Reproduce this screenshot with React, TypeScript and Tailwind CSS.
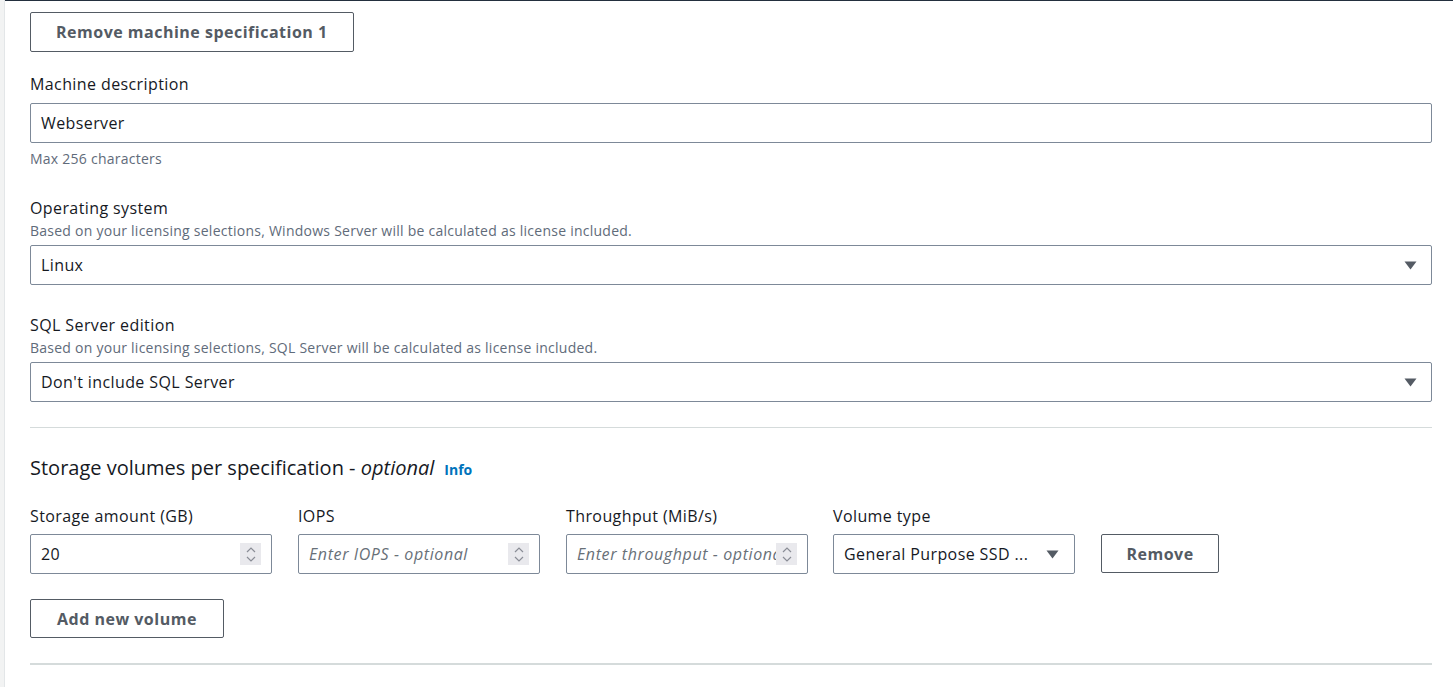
import React from "react"

const font = { fontFamily: '"Open Sans", "Liberation Sans", Arial, sans-serif' }

function Caret() {
  return (
    <svg width="13" height="9" viewBox="0 0 13 9" className="shrink-0">
      <path d="M0.5 0.5 H12.5 L6.5 8.5 Z" fill="#545b64" />
    </svg>
  )
}

function Spinner() {
  return (
    <div className="shrink-0 w-[21px] h-[22px] bg-[#e9e9ed] flex flex-col items-center justify-center gap-[3px]">
      <svg width="10" height="6" viewBox="0 0 10 6">
        <path d="M1 5 L5 1 L9 5" fill="none" stroke="#8a8d96" strokeWidth="1.2" />
      </svg>
      <svg width="10" height="6" viewBox="0 0 10 6">
        <path d="M1 1 L5 5 L9 1" fill="none" stroke="#8a8d96" strokeWidth="1.2" />
      </svg>
    </div>
  )
}

function NumberField({ value, placeholder }: { value?: string; placeholder?: string }) {
  return (
    <div className="h-10 w-[242px] border border-[#7d8998] rounded-[2px] flex items-center pl-[10px] pr-[10px] bg-white">
      <div className="flex-1 overflow-hidden whitespace-nowrap">
        {value ? (
          <span className="text-[16px] tracking-[0.4px] text-[#16191f]">{value}</span>
        ) : (
          <span className="text-[16px] tracking-[0.6px] italic text-[#687078]">{placeholder}</span>
        )}
      </div>
      <Spinner />
    </div>
  )
}

function Select({ value, className }: { value: string; className?: string }) {
  return (
    <div
      className={
        "h-10 border border-[#7d8998] rounded-[2px] flex items-center pl-[10px] pr-[14px] bg-white " +
        (className ?? "")
      }
    >
      <span className="flex-1 text-[16px] tracking-[0.4px] text-[#16191f] whitespace-nowrap overflow-hidden">
        {value}
      </span>
      <Caret />
    </div>
  )
}

function Button({ children, className }: { children: React.ReactNode; className?: string }) {
  return (
    <button
      className={
        "h-10 border border-[#545b64] rounded-[2px] bg-white text-[16px] tracking-[0.5px] font-bold text-[#545b64] " +
        (className ?? "")
      }
    >
      {children}
    </button>
  )
}

function Label({ children }: { children: React.ReactNode }) {
  return <div className="text-[16px] tracking-[0.4px] leading-[22px] text-[#16191f]">{children}</div>
}

function Hint({ children }: { children: React.ReactNode }) {
  return <div className="text-[14px] tracking-[0.25px] leading-[18px] text-[#5f6b7a]">{children}</div>
}

export default function App() {
  return (
    <div className="w-[1453px] h-[687px] bg-white flex overflow-hidden" style={font}>
      <div className="w-[5px] shrink-0 bg-[#f2f3f3] border-r border-[#e3e6e8]" />
      <div className="flex-1 border-t border-[#232f3e] pl-[25px] pr-[21px]">
        <Button className="mt-[11px] px-[25px]">Remove machine specification 1</Button>

        <div className="mt-[21px]">
          <Label>Machine description</Label>
          <div className="mt-[8px] h-10 border border-[#7d8998] rounded-[2px] flex items-center pl-[10px]">
            <span className="text-[16px] tracking-[0.4px] text-[#16191f]">Webserver</span>
          </div>
          <div className="mt-[7px]">
            <Hint>Max 256 characters</Hint>
          </div>
        </div>

        <div className="mt-[29px]">
          <Label>Operating system</Label>
          <div className="mt-[3px]">
            <Hint>Based on your licensing selections, Windows Server will be calculated as license included.</Hint>
          </div>
          <Select value="Linux" className="mt-[5px]" />
        </div>

        <div className="mt-[29px]">
          <Label>SQL Server edition</Label>
          <div className="mt-[3px]">
            <Hint>Based on your licensing selections, SQL Server will be calculated as license included.</Hint>
          </div>
          <Select value="Don't include SQL Server" className="mt-[5px]" />
        </div>

        <div className="mt-[25px] h-px bg-[#d5dbdb]" />

        <div className="mt-[27px] flex items-baseline gap-[10px]">
          <h2 className="text-[20px] leading-[26px] text-[#16191f] font-normal">
            Storage volumes per specification - <i>optional</i>
          </h2>
          <a className="text-[14px] font-bold text-[#0073bb]">Info</a>
        </div>

        <div className="mt-[24px] flex items-end gap-[26px]">
          <div>
            <Label>Storage amount (GB)</Label>
            <div className="mt-[7px]">
              <NumberField value="20" />
            </div>
          </div>
          <div>
            <Label>IOPS</Label>
            <div className="mt-[7px]">
              <NumberField placeholder="Enter IOPS - optional" />
            </div>
          </div>
          <div>
            <Label>Throughput (MiB/s)</Label>
            <div className="mt-[7px]">
              <NumberField placeholder="Enter throughput - optional" />
            </div>
          </div>
          <div className="-ml-px">
            <Label>Volume type</Label>
            <div className="mt-[7px]">
              <Select value="General Purpose SSD ..." className="w-[242px] pr-[15px]" />
            </div>
          </div>
          <Button className="w-[118px] h-[39px] mb-px">Remove</Button>
        </div>

        <Button className="mt-[25px] h-[39px] px-[26px]">Add new volume</Button>

        <div className="mt-[25px] h-[2px] bg-[#d5dbdb]" />
      </div>
    </div>
  )
}
